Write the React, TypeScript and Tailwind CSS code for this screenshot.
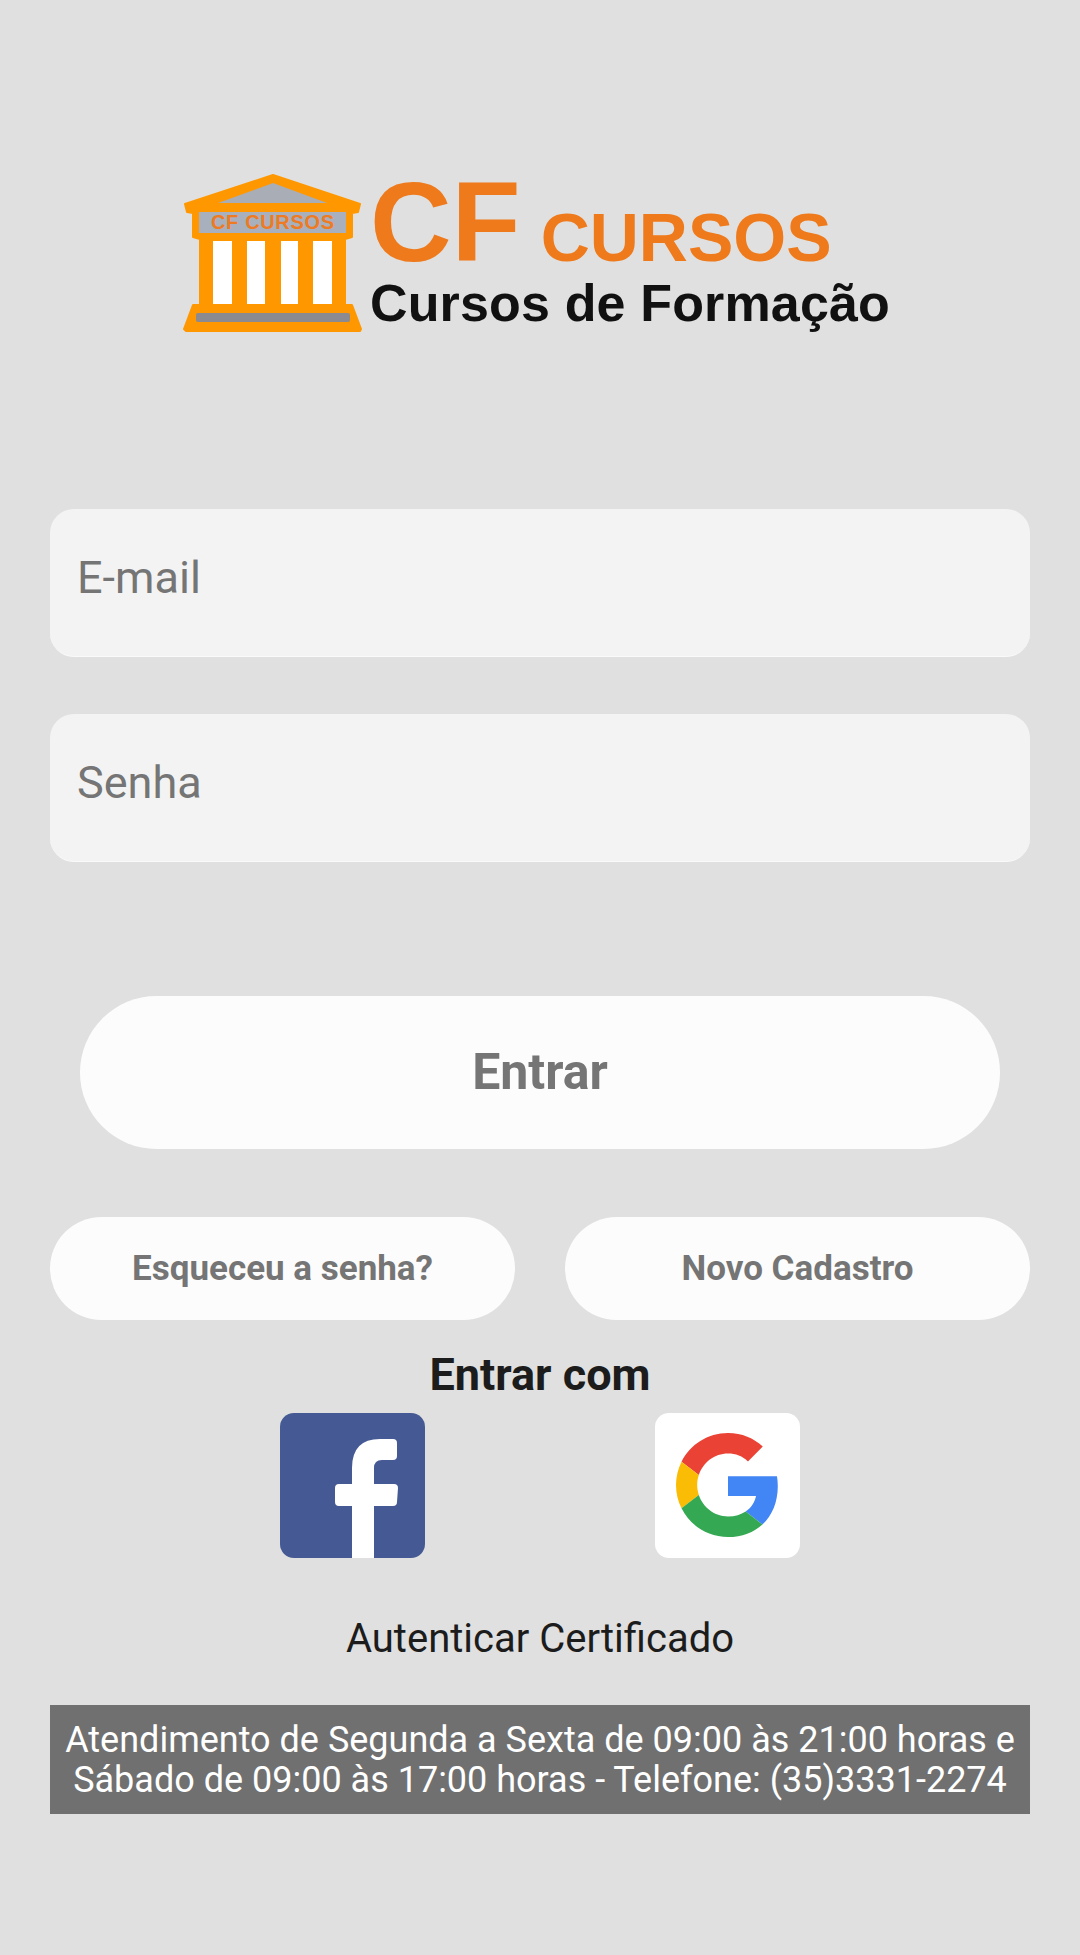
const Temple = () => (
  <svg width="184" height="162" viewBox="0 0 184 162" className="shrink-0">
    <path
      d="M92 3 L179 32 L177 40 L171 41 L171 65 L164 67 L164 133 L171 133 L180 157 L179 159 L5 159 L3 157 L12 133 L19 133 L19 67 L12 65 L12 41 L6 40 L4 32 Z"
      fill="#ff9800"
      stroke="#ff9800"
      strokeWidth="2"
      strokeLinejoin="round"
    />
    <path d="M92 11 L146 31 L37 31 Z" fill="#a9adb5" />
    <rect x="18" y="40" width="147" height="21" fill="#a9b0bd" />
    <text x="91.5" y="57" textAnchor="middle" fontSize="20" fontWeight="700" textLength="123" fill="#ee7a22" fontFamily="Liberation Sans, sans-serif">
      CF CURSOS
    </text>
    <rect x="32" y="69" width="19" height="63" fill="#fff" />
    <rect x="66" y="69" width="18" height="63" fill="#fff" />
    <rect x="100" y="69" width="17" height="63" fill="#fff" />
    <rect x="132" y="69" width="19" height="63" fill="#fff" />
    <rect x="15" y="141" width="154" height="9" rx="2" fill="#8a8a90" />
  </svg>
);

const FacebookIcon = () => (
  <svg width="145" height="145" viewBox="0 0 145 145" className="rounded-[14px]">
    <rect width="145" height="145" fill="#455a94" />
    <path
      d="M72 145 V93 H59 Q55 93 55 89 V75 Q55 71 59 71 H72 V55 Q72 26 100 26 H113 Q117 26 117 30 V43 Q117 47 113 47 H102 Q94 47 94 55 V71 H114 Q118 71 118 75 L117 89 Q117 93 113 93 H94 V145 Z"
      fill="#fff"
    />
  </svg>
);

const GoogleIcon = () => (
  <div className="flex h-[145px] w-[145px] items-center justify-center rounded-[14px] bg-white pb-[1px]">
    <svg width="104" height="104" viewBox="0 0 48 48">
      <path fill="#EA4335" d="M24 9.5c3.54 0 6.71 1.22 9.21 3.6l6.85-6.85C35.9 2.38 30.47 0 24 0 14.62 0 6.51 5.38 2.56 13.22l7.98 6.19C12.43 13.72 17.74 9.5 24 9.5z" />
      <path fill="#4285F4" d="M46.98 24.55c0-1.57-.15-3.09-.38-4.55H24v9.02h12.94c-.58 2.96-2.26 5.48-4.78 7.18l7.73 6c4.51-4.18 7.09-10.36 7.09-17.65z" />
      <path fill="#FBBC05" d="M10.53 28.59c-.48-1.45-.76-2.99-.76-4.59s.27-3.14.76-4.59l-7.98-6.19C.92 16.46 0 20.12 0 24c0 3.88.92 7.54 2.56 10.78l7.97-6.19z" />
      <path fill="#34A853" d="M24 48c6.48 0 11.93-2.13 15.89-5.81l-7.73-6c-2.15 1.45-4.92 2.3-8.16 2.3-6.26 0-11.57-4.22-13.47-9.91l-7.98 6.19C6.51 42.62 14.62 48 24 48z" />
    </svg>
  </div>
);

export default function App() {
  return (
    <div className="flex h-[1955px] w-[1080px] flex-col overflow-hidden bg-[#e0e0e0] px-[50px] font-['Roboto',sans-serif]">
      <div className="ml-[131px] mt-[172px] flex h-[165px] items-start gap-[5px] font-['Liberation_Sans',sans-serif]">
        <Temple />
        <div className="flex flex-col">
          <div className="flex h-[100px] items-baseline font-bold text-[#ee7a1c]">
            <span className="text-[113px] leading-[100px]">CF</span>
            <span className="ml-[20px] text-[68px] leading-[100px]">CURSOS</span>
          </div>
          <div className="mt-[3px] text-[52px] font-bold leading-[56px] tracking-[0.15px] text-[#111]">Cursos de Formação</div>
        </div>
      </div>

      <div className="mt-[172px] flex flex-col gap-[57px]">
        <input
          placeholder="E-mail"
          className="h-[148px] w-full rounded-[24px] border-b border-[#fafafa] bg-[#f3f3f3] px-[27px] pb-[11px] text-[45px] outline-none placeholder:text-[#757575]"
        />
        <input
          placeholder="Senha"
          className="h-[148px] w-full rounded-[24px] border-b border-[#fafafa] bg-[#f3f3f3] px-[27px] pb-[10px] text-[45px] outline-none placeholder:text-[#757575]"
        />
      </div>

      <button className="mx-[30px] mt-[134px] h-[153px] rounded-full bg-[#fcfcfc] text-[50px] font-bold text-[#757575]">
        Entrar
      </button>

      <div className="mt-[68px] flex justify-between">
        <button className="h-[103px] w-[465px] rounded-full bg-[#fcfcfc] pt-[2px] text-[35px] font-bold text-[#757575]">
          Esqueceu a senha?
        </button>
        <button className="h-[103px] w-[465px] rounded-full bg-[#fcfcfc] pt-[2px] text-[35px] font-bold text-[#757575]">
          Novo Cadastro
        </button>
      </div>

      <div className="mt-[30px] text-center text-[45px] font-bold leading-[50px] text-[#1c1c1c]">Entrar com</div>

      <div className="mt-[13px] flex justify-center gap-[230px]">
        <FacebookIcon />
        <GoogleIcon />
      </div>

      <div className="mt-[58px] text-center text-[40px] leading-[46px] text-[#1c1c1c]">Autenticar Certificado</div>

      <div className="mt-[43px] flex h-[109px] flex-col justify-center bg-[#707070] text-center text-[36px] leading-[40px] text-white">
        <div>Atendimento de Segunda a Sexta de 09:00 às 21:00 horas e</div>
        <div>Sábado de 09:00 às 17:00 horas - Telefone: (35)3331-2274</div>
      </div>
    </div>
  );
}
